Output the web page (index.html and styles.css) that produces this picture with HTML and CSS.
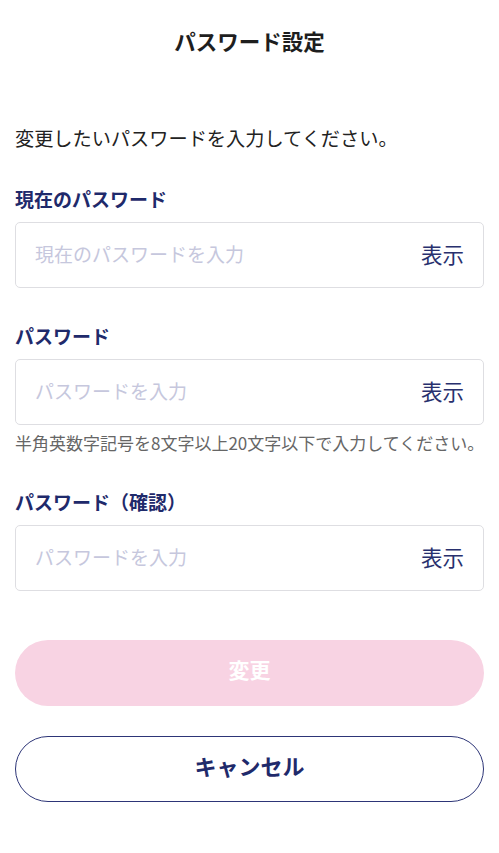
FILE: index.html
```html
<!DOCTYPE html>
<html lang="ja">
<head>
  <meta charset="UTF-8" />
  <title>パスワード設定</title>
  <link rel="stylesheet" href="styles.css">
</head>
<body>

  <div class="page">
    <h1 class="title">パスワード設定</h1>

    <p class="lead">変更したいパスワードを入力してください。</p>

    <div class="field">
      <label class="field-label" for="current">現在のパスワード</label>
      <div class="input-box">
        <input type="password" id="current" placeholder="現在のパスワードを入力" />
        <button type="button" class="toggle">表示</button>
      </div>
    </div>

    <div class="field">
      <label class="field-label" for="newpass">パスワード</label>
      <div class="input-box">
        <input type="password" id="newpass" placeholder="パスワードを入力" />
        <button type="button" class="toggle">表示</button>
      </div>
      <p class="hint">半角英数字記号を8文字以上20文字以下で入力してください。</p>
    </div>

    <div class="field">
      <label class="field-label" for="confirm">パスワード（確認）</label>
      <div class="input-box">
        <input type="password" id="confirm" placeholder="パスワードを入力" />
        <button type="button" class="toggle">表示</button>
      </div>
    </div>

    <div class="actions">
      <button type="button" class="btn btn-submit" disabled>変更</button>
      <button type="button" class="btn btn-cancel">キャンセル</button>
    </div>
  </div>

</body>
</html>
```

FILE: styles.css
```css
body {
  margin: 0;
  font-family: "Noto Sans CJK JP", "Noto Sans", sans-serif;
  background-color: #ffffff;
  color: #222;
}

.page {
  padding: 0 15px 40px;
}

.title {
  margin: 27px 0 0;
  font-size: 21.5px;
  line-height: 28px;
  font-weight: bold;
  text-align: center;
  color: #1e1e1e;
}

.lead {
  margin: 70px 0 0;
  font-size: 19.2px;
  line-height: 26px;
  color: #222;
}

.field {
  margin-top: 35px;
}

.field-label {
  display: block;
  font-size: 19px;
  line-height: 26px;
  font-weight: bold;
  color: #1f2a6b;
}

.input-box {
  display: flex;
  align-items: center;
  height: 66px;
  box-sizing: border-box;
  margin-top: 10px;
  padding: 0 19px 3px;
  border: 1px solid #dedee2;
  border-radius: 5px;
}

.input-box input {
  flex: 1;
  min-width: 0;
  border: none;
  outline: none;
  padding: 0;
  font-family: inherit;
  font-size: 19px;
  color: #222;
  background: transparent;
}

.input-box input::placeholder {
  color: #c6c7dd;
}

.toggle {
  border: none;
  background: none;
  padding: 0;
  font-family: inherit;
  font-size: 21.5px;
  color: #28306e;
  cursor: pointer;
}

.hint {
  margin: 7px 0 0;
  font-size: 17px;
  line-height: 22px;
  white-space: nowrap;
  color: #666;
}

.actions {
  display: flex;
  flex-direction: column;
  gap: 30px;
  margin-top: 49px;
}

.btn {
  height: 66px;
  padding: 0 0 8px;
  border-radius: 33px;
  font-family: inherit;
  font-size: 21px;
  font-weight: bold;
  cursor: pointer;
}

.btn-submit {
  border: none;
  background-color: #f8d3e3;
  color: #ffffff;
}

.btn-cancel {
  border: 1px solid #2d3577;
  background-color: #ffffff;
  color: #1f2a6b;
  font-size: 22px;
}
```
